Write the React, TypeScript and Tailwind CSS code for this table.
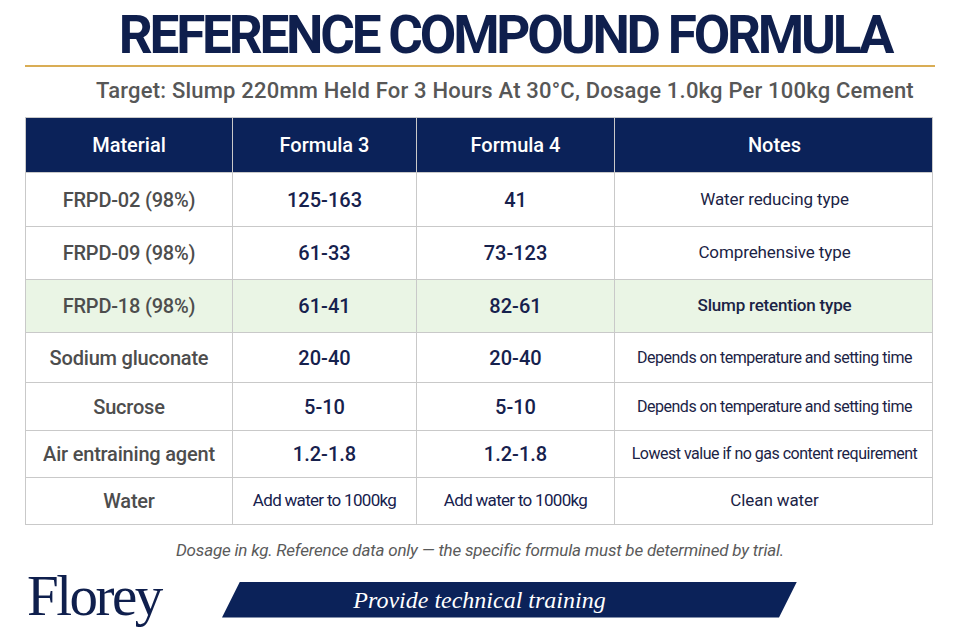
import React from 'react'

const rows = [
  { material: 'FRPD-02 (98%)', f3: '125-163', f4: '41', note: 'Water reducing type', h: 'h-[54px]' },
  { material: 'FRPD-09 (98%)', f3: '61-33', f4: '73-123', note: 'Comprehensive type', h: 'h-[53px]' },
  { material: 'FRPD-18 (98%)', f3: '61-41', f4: '82-61', note: 'Slump retention type', h: 'h-[53px]', green: true },
  { material: 'Sodium gluconate', f3: '20-40', f4: '20-40', note: 'Depends on temperature and setting time', h: 'h-[50px]', long: true },
  { material: 'Sucrose', f3: '5-10', f4: '5-10', note: 'Depends on temperature and setting time', h: 'h-[48px]', long: true },
  { material: 'Air entraining agent', f3: '1.2-1.8', f4: '1.2-1.8', note: 'Lowest value if no gas content requirement', h: 'h-[47px]', long: true },
  { material: 'Water', f3: 'Add water to 1000kg', f4: 'Add water to 1000kg', note: 'Clean water', h: 'h-[47px]', small: true },
]

const cols = 'grid grid-cols-[206px_184px_198px_320px]'

export default function App() {
  return (
    <div className="w-[960px] h-[640px] bg-white overflow-hidden font-['Roboto',sans-serif]">
      {/* Title */}
      <div className="pt-[6px] pl-[50px] text-center">
        <h1 className="text-[53px] leading-[58px] font-bold tracking-[-3.2px] text-[#0f1f4d]">
          REFERENCE COMPOUND FORMULA
        </h1>
      </div>
      <div className="mx-[25px] mt-[1px] h-[2px] bg-[#d9ad55]" />
      <p className="pl-[50px] mt-[10px] text-center text-[22px] leading-[28px] font-medium text-[#575757] tracking-[0.2px]">
        Target: Slump 220mm Held For 3 Hours At 30°C, Dosage 1.0kg Per 100kg Cement
      </p>

      {/* Table */}
      <div className="mx-[25px] mt-[12px] w-[908px] border border-[#c9c9c9]">
        <div className={`${cols} h-[54px] bg-[#0b2259] text-white text-[20px] font-medium`}>
          {['Material', 'Formula 3', 'Formula 4', 'Notes'].map((t, i) => (
            <div key={t} className={`flex items-center justify-center ${i > 0 ? 'border-l border-[#c9c9c9]' : ''}`}>
              {t}
            </div>
          ))}
        </div>
        {rows.map(r => (
          <div
            key={r.material}
            className={`${cols} ${r.h} border-t border-[#c9c9c9] ${r.green ? 'bg-[#eaf5e5]' : 'bg-white'}`}
          >
            <div className="flex items-center justify-center text-[20px] font-medium text-[#4d4d4d] tracking-[-0.2px]">
              {r.material}
            </div>
            <div className={`flex items-center justify-center border-l border-[#c9c9c9] text-[#16214d] ${r.small ? 'text-[17px] tracking-[-0.7px]' : 'text-[20px] font-medium'}`}>
              {r.f3}
            </div>
            <div className={`flex items-center justify-center border-l border-[#c9c9c9] text-[#16214d] ${r.small ? 'text-[17px] tracking-[-0.7px]' : 'text-[20px] font-medium'}`}>
              {r.f4}
            </div>
            <div
              className={`flex items-center justify-center border-l border-[#c9c9c9] text-[#1b2345] ${
                r.long ? 'text-[16px] tracking-[-0.5px]' : r.green ? 'text-[17px] font-medium tracking-[-0.2px]' : 'text-[17px] tracking-[-0.1px]'
              }`}
            >
              {r.note}
            </div>
          </div>
        ))}
      </div>

      {/* Footnote */}
      <p className="mt-[13px] text-center text-[17px] italic text-[#5a5a5a] tracking-[-0.2px]">
        Dosage in kg. Reference data only — the specific formula must be determined by trial.
      </p>

      {/* Footer */}
      <div className="mt-[1px] flex items-center">
        <div className="ml-[27px] w-[190px] font-['Liberation_Serif',serif] text-[57px] leading-[62px] text-[#0f1f4d] tracking-[-2.5px]">
          Florey
        </div>
        <div className="ml-[5px] mt-[8px] w-[575px] h-[36px] bg-[#0b2259] [clip-path:polygon(18px_0,100%_0,calc(100%-18px)_100%,0_100%)] flex items-center justify-center pr-[60px]">
          <span className="font-['Liberation_Serif',serif] italic text-[24px] text-white">
            Provide technical training
          </span>
        </div>
      </div>
    </div>
  )
}
